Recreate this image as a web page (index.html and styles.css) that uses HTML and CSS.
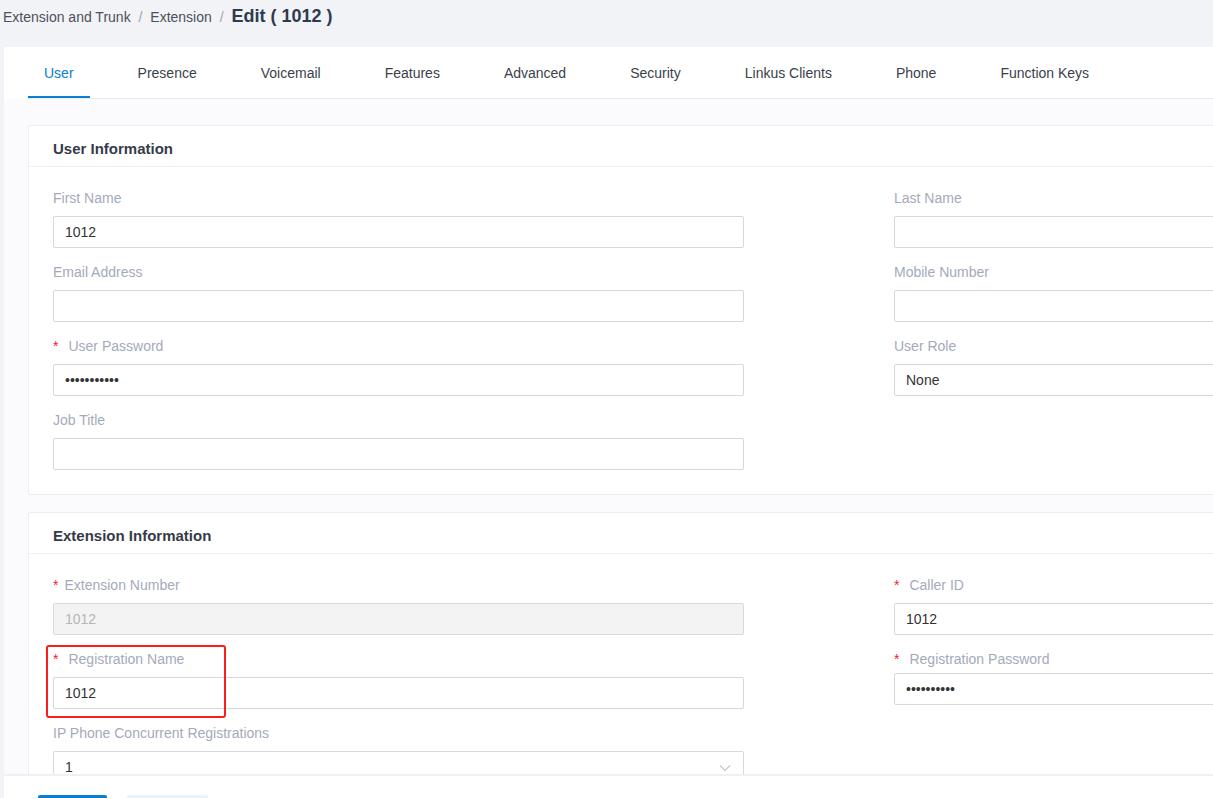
FILE: index.html
```html
<!DOCTYPE html>
<html>
<head>
  <title>Edit Extension</title>
  <link rel="stylesheet" href="styles.css">
</head>
<body>
  <div class="crumbs">
    <span class="crumb">Extension and Trunk</span>
    <span class="sep">/</span>
    <span class="crumb">Extension</span>
    <span class="sep">/</span>
    <span class="crumb-current">Edit ( 1012 )</span>
  </div>

  <div class="panel">
    <ul class="tabs">
      <li class="tab active">User</li>
      <li class="tab">Presence</li>
      <li class="tab">Voicemail</li>
      <li class="tab">Features</li>
      <li class="tab">Advanced</li>
      <li class="tab">Security</li>
      <li class="tab">Linkus Clients</li>
      <li class="tab">Phone</li>
      <li class="tab">Function Keys</li>
    </ul>

    <div class="content">
      <div class="card">
        <div class="card-title">User Information</div>
        <div class="card-body">
          <div class="col">
            <div class="field">
              <label class="label">First Name</label>
              <input class="input" type="text" value="1012">
            </div>
            <div class="field">
              <label class="label">Email Address</label>
              <input class="input" type="text" value="">
            </div>
            <div class="field">
              <label class="label"><span class="req">*</span>User Password</label>
              <input class="input" type="password" value="12345678901">
            </div>
            <div class="field">
              <label class="label">Job Title</label>
              <input class="input" type="text" value="">
            </div>
          </div>
          <div class="col">
            <div class="field">
              <label class="label">Last Name</label>
              <input class="input" type="text" value="">
            </div>
            <div class="field">
              <label class="label">Mobile Number</label>
              <input class="input" type="text" value="">
            </div>
            <div class="field">
              <label class="label">User Role</label>
              <div class="input select">None</div>
            </div>
          </div>
        </div>
      </div>

      <div class="card">
        <div class="card-title">Extension Information</div>
        <div class="card-body">
          <div class="col">
            <div class="field">
              <label class="label"><span class="req tight">*</span>Extension Number</label>
              <input class="input" type="text" value="1012" disabled>
            </div>
            <div class="field">
              <label class="label"><span class="req">*</span>Registration Name</label>
              <input class="input" type="text" value="1012">
              <div class="mark"></div>
            </div>
            <div class="field">
              <label class="label">IP Phone Concurrent Registrations</label>
              <div class="input select">
                1
                <svg class="chevron" width="12" height="8" viewBox="0 0 12 8"><path d="M1 1.5 L6 6.5 L11 1.5" fill="none" stroke="#c3c6d0" stroke-width="1.1"/></svg>
              </div>
            </div>
          </div>
          <div class="col">
            <div class="field">
              <label class="label"><span class="req">*</span>Caller ID</label>
              <input class="input" type="text" value="1012">
            </div>
            <div class="field">
              <label class="label label-short"><span class="req">*</span>Registration Password</label>
              <input class="input" type="password" value="1234567890">
            </div>
          </div>
        </div>
      </div>
    </div>

    <div class="footer">
      <button class="btn btn-primary">Save</button>
      <button class="btn btn-default">Cancel</button>
    </div>
  </div>
</body>
</html>
```

FILE: styles.css
```css
body {
  margin: 0;
  height: 798px;
  overflow: hidden;
  background-color: #f2f3f7;
  font-family: "Liberation Sans", Arial, sans-serif;
  font-size: 14px;
  color: #333;
}

.crumbs {
  height: 47px;
  padding: 6px 0 0 3px;
  box-sizing: border-box;
  line-height: 20px;
  color: #4b505c;
}

.sep {
  color: #a0a4ad;
  margin: 0 4px;
}

.crumb-current {
  font-size: 18px;
  font-weight: bold;
  color: #2f3a4f;
}

.panel {
  margin-left: 4px;
  background-color: white;
}

.tabs {
  list-style: none;
  margin: 0 0 0 24px;
  padding: 1px 0 0 0;
  display: flex;
  gap: 32px;
  border-bottom: 1px solid #e7e9f0;
}

.tab {
  padding: 0 16px;
  height: 50px;
  line-height: 50px;
  color: #3a3f4b;
  box-sizing: border-box;
}

.tab.active {
  color: #0b80d0;
  border-bottom: 2px solid #0b80d0;
  margin-bottom: -1px;
}

.content {
  height: 675px;
  overflow: hidden;
  padding: 26px 0 0 24px;
  box-sizing: border-box;
  background-color: #fbfbfd;
}

.card {
  width: 1582px;
  background-color: white;
  border: 1px solid #eceef3;
  border-radius: 2px;
  margin-bottom: 17px;
}

.card-title {
  padding: 13px 24px 7px;
  line-height: 20px;
  font-size: 15px;
  font-weight: bold;
  color: #353b48;
  border-bottom: 1px solid #eef0f4;
}

.card-body {
  display: grid;
  grid-template-columns: 691px 691px;
  column-gap: 150px;
  padding: 21px 24px 10px;
}

.field {
  margin-bottom: 14px;
  position: relative;
}

.label {
  display: block;
  line-height: 20px;
  margin-bottom: 8px;
  color: #a5aabb;
}

.label-short {
  margin-bottom: 4px;
}

.req {
  color: #f5222d;
  margin-right: 10px;
}

.req.tight {
  margin-right: 6px;
}

.input {
  display: block;
  width: 100%;
  height: 32px;
  box-sizing: border-box;
  padding: 0 11px;
  border: 1px solid #d5d7e1;
  border-radius: 2px;
  background-color: white;
  font-family: "Liberation Sans", Arial, sans-serif;
  font-size: 14px;
  color: #333;
  outline: none;
}

.input:disabled {
  background-color: #f3f3f3;
  color: #b5b5b8;
  border-color: #d9dae1;
}

.select {
  line-height: 30px;
  position: relative;
}

.chevron {
  position: absolute;
  right: 12px;
  top: 12px;
}

/* red highlight around the registration name */
.mark {
  position: absolute;
  left: -7px;
  top: -4px;
  width: 180px;
  height: 73px;
  box-sizing: border-box;
  border: 2px solid #fd1d1d;
  border-radius: 3px;
}

.footer {
  border-top: 2px solid #eef0f4;
  padding: 19px 0 0 34px;
  display: flex;
  gap: 20px;
  height: 80px;
}

.btn {
  height: 32px;
  border: none;
  border-radius: 2px;
  font-family: "Liberation Sans", Arial, sans-serif;
  font-size: 14px;
}

.btn-primary {
  width: 69px;
  background-color: #0a7fd0;
  color: white;
}

.btn-default {
  width: 81px;
  background-color: #e7f2fb;
  color: #0a7fd0;
}
```
